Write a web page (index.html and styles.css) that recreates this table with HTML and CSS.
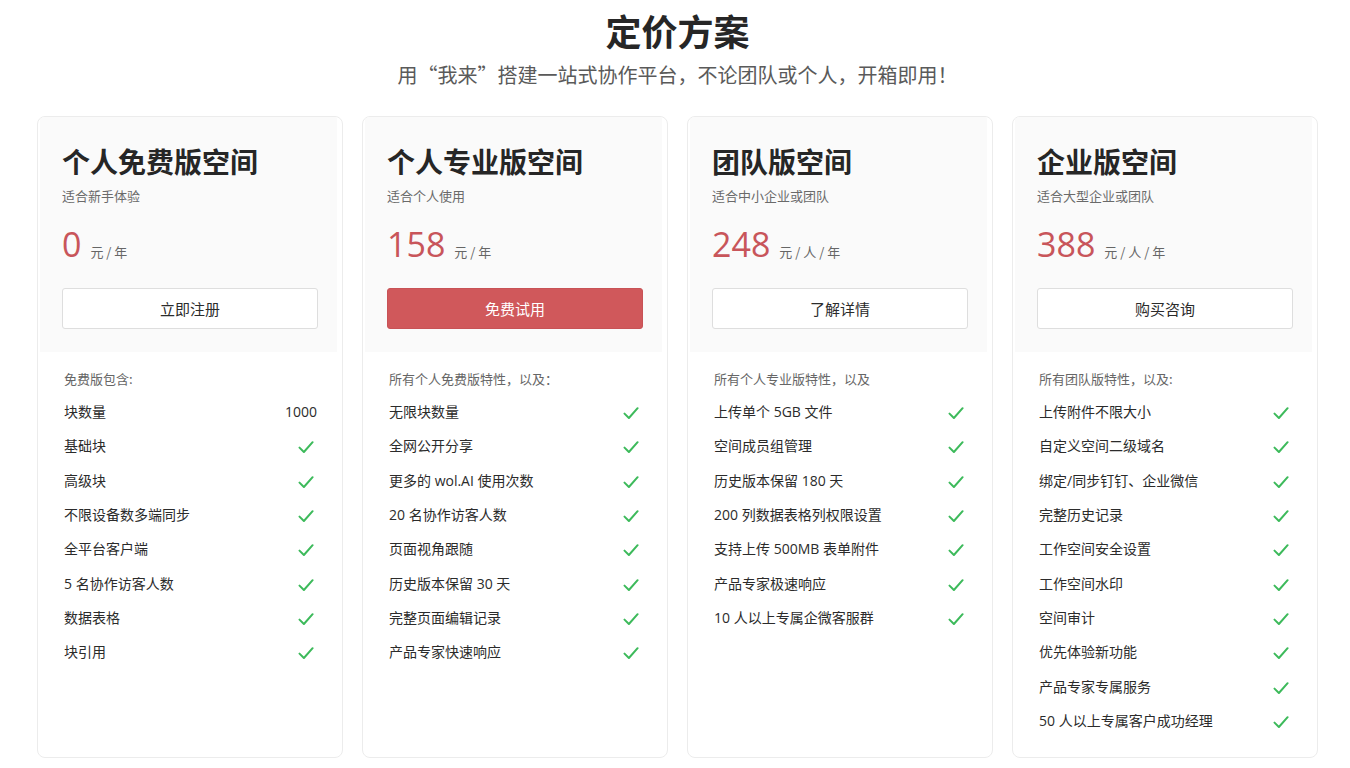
FILE: index.html
```html
<!DOCTYPE html>
<html lang="zh-CN">
<head>
<meta charset="utf-8">
<title>定价方案</title>
<link rel="stylesheet" href="styles.css">
</head>
<body>
<svg width="0" height="0" style="position:absolute">
  <defs>
    <symbol id="chk" viewBox="0 0 16 16">
      <path d="M1.5 8.6 L5.9 13 L14.6 3.2" fill="none" stroke="currentColor" stroke-width="2" stroke-linecap="round" stroke-linejoin="round"/>
    </symbol>
  </defs>
</svg>
<main class="page">
  <h1 class="title">定价方案</h1>
  <p class="subtitle">用“我来”搭建一站式协作平台，不论团队或个人，开箱即用！</p>
  <section class="plans">
    <article class="card">
      <div class="head">
        <h2 class="name">个人免费版空间</h2>
        <p class="desc">适合新手体验</p>
        <div class="price"><span class="num">0</span><span class="unit">元 / 年</span></div>
        <button class="btn">立即注册</button>
      </div>
      <div class="body">
        <p class="intro">免费版包含:</p>
        <ul class="feats">
          <li><span>块数量</span><span class="val">1000</span></li>
          <li><span>基础块</span><svg class="ck"><use href="#chk"/></svg></li>
          <li><span>高级块</span><svg class="ck"><use href="#chk"/></svg></li>
          <li><span>不限设备数多端同步</span><svg class="ck"><use href="#chk"/></svg></li>
          <li><span>全平台客户端</span><svg class="ck"><use href="#chk"/></svg></li>
          <li><span>5 名协作访客人数</span><svg class="ck"><use href="#chk"/></svg></li>
          <li><span>数据表格</span><svg class="ck"><use href="#chk"/></svg></li>
          <li><span>块引用</span><svg class="ck"><use href="#chk"/></svg></li>
        </ul>
      </div>
    </article>
    <article class="card">
      <div class="head">
        <h2 class="name">个人专业版空间</h2>
        <p class="desc">适合个人使用</p>
        <div class="price"><span class="num">158</span><span class="unit">元 / 年</span></div>
        <button class="btn primary">免费试用</button>
      </div>
      <div class="body">
        <p class="intro">所有个人免费版特性，以及：</p>
        <ul class="feats">
          <li><span>无限块数量</span><svg class="ck"><use href="#chk"/></svg></li>
          <li><span>全网公开分享</span><svg class="ck"><use href="#chk"/></svg></li>
          <li><span>更多的 wol.AI 使用次数</span><svg class="ck"><use href="#chk"/></svg></li>
          <li><span>20 名协作访客人数</span><svg class="ck"><use href="#chk"/></svg></li>
          <li><span>页面视角跟随</span><svg class="ck"><use href="#chk"/></svg></li>
          <li><span>历史版本保留 30 天</span><svg class="ck"><use href="#chk"/></svg></li>
          <li><span>完整页面编辑记录</span><svg class="ck"><use href="#chk"/></svg></li>
          <li><span>产品专家快速响应</span><svg class="ck"><use href="#chk"/></svg></li>
        </ul>
      </div>
    </article>
    <article class="card">
      <div class="head">
        <h2 class="name">团队版空间</h2>
        <p class="desc">适合中小企业或团队</p>
        <div class="price"><span class="num">248</span><span class="unit">元 / 人 / 年</span></div>
        <button class="btn">了解详情</button>
      </div>
      <div class="body">
        <p class="intro">所有个人专业版特性，以及</p>
        <ul class="feats">
          <li><span>上传单个 5GB 文件</span><svg class="ck"><use href="#chk"/></svg></li>
          <li><span>空间成员组管理</span><svg class="ck"><use href="#chk"/></svg></li>
          <li><span>历史版本保留 180 天</span><svg class="ck"><use href="#chk"/></svg></li>
          <li><span>200 列数据表格列权限设置</span><svg class="ck"><use href="#chk"/></svg></li>
          <li><span>支持上传 500MB 表单附件</span><svg class="ck"><use href="#chk"/></svg></li>
          <li><span>产品专家极速响应</span><svg class="ck"><use href="#chk"/></svg></li>
          <li><span>10 人以上专属企微客服群</span><svg class="ck"><use href="#chk"/></svg></li>
        </ul>
      </div>
    </article>
    <article class="card">
      <div class="head">
        <h2 class="name">企业版空间</h2>
        <p class="desc">适合大型企业或团队</p>
        <div class="price"><span class="num">388</span><span class="unit">元 / 人 / 年</span></div>
        <button class="btn">购买咨询</button>
      </div>
      <div class="body">
        <p class="intro">所有团队版特性，以及:</p>
        <ul class="feats">
          <li><span>上传附件不限大小</span><svg class="ck"><use href="#chk"/></svg></li>
          <li><span>自定义空间二级域名</span><svg class="ck"><use href="#chk"/></svg></li>
          <li><span>绑定/同步钉钉、企业微信</span><svg class="ck"><use href="#chk"/></svg></li>
          <li><span>完整历史记录</span><svg class="ck"><use href="#chk"/></svg></li>
          <li><span>工作空间安全设置</span><svg class="ck"><use href="#chk"/></svg></li>
          <li><span>工作空间水印</span><svg class="ck"><use href="#chk"/></svg></li>
          <li><span>空间审计</span><svg class="ck"><use href="#chk"/></svg></li>
          <li><span>优先体验新功能</span><svg class="ck"><use href="#chk"/></svg></li>
          <li><span>产品专家专属服务</span><svg class="ck"><use href="#chk"/></svg></li>
          <li><span>50 人以上专属客户成功经理</span><svg class="ck"><use href="#chk"/></svg></li>
        </ul>
      </div>
    </article>
  </section>
</main>
</body>
</html>
```

FILE: styles.css
```css
* { box-sizing: border-box; }
html, body { margin: 0; padding: 0; background: #fff; }
body {
  font-family: "Open Sans", "Noto Sans CJK SC", sans-serif;
  color: #2b2b2b;
}
.page {
  width: 1350px;
  padding: 6px 0 0 37px;
}
.title {
  margin: 0;
  width: 1281px;
  text-align: center;
  font-family: "Noto Sans CJK SC", sans-serif;
  font-size: 36px;
  line-height: 48px;
  font-weight: 700;
  color: #262626;
}
.subtitle {
  margin: 7px 0 0;
  width: 1281px;
  text-align: center;
  font-family: "Noto Sans CJK SC", sans-serif;
  font-size: 20px;
  line-height: 28px;
  color: #5a5a5a;
}
.plans {
  margin-top: 27px;
  width: 1281px;
  display: grid;
  grid-template-columns: repeat(4, 306px);
  gap: 19px;
}
.card {
  height: 642px;
  border: 1px solid #ececec;
  border-radius: 8px;
  background: #fff;
  overflow: hidden;
}
.head {
  margin: 0 5px 0 2px;
  background: #fafafa;
  padding: 26px 22px 22px 22px;
  height: 235px;
}
.name {
  margin: 0;
  font-family: "Noto Sans CJK SC", sans-serif;
  font-size: 28px;
  line-height: 36px;
  font-weight: 700;
  color: #262626;
}
.desc {
  margin: 8px 0 0;
  font-family: "Noto Sans CJK SC", sans-serif;
  font-size: 13px;
  line-height: 18px;
  color: #6a6a6a;
}
.price {
  margin-top: 19px;
  display: flex;
  align-items: baseline;
  height: 40px;
}
.num {
  font-size: 34px;
  line-height: 40px;
  color: #c8555a;
}
.unit {
  margin-left: 9px;
  font-family: "Noto Sans CJK SC", sans-serif;
  font-size: 13px;
  color: #666;
}
.btn {
  display: block;
  margin-top: 24px;
  width: 256px;
  height: 41px;
  border: 1px solid #dedede;
  border-radius: 3px;
  background: #fff;
  font-family: "Noto Sans CJK SC", sans-serif;
  font-size: 15px;
  color: #2b2b2b;
  cursor: pointer;
}
.btn.primary {
  background: #d0585b;
  border-color: #c85256;
  color: #fff;
}
.body {
  padding: 17px 26px 0 26px;
}
.intro {
  margin: 0;
  font-family: "Noto Sans CJK SC", sans-serif;
  font-size: 13px;
  line-height: 20px;
  color: #666;
}
.feats {
  list-style: none;
  margin: 5px 0 0;
  padding: 0;
}
.feats li {
  display: flex;
  justify-content: space-between;
  align-items: center;
  height: 34.3px;
  font-family: "Open Sans", "Noto Sans CJK SC", sans-serif;
  font-size: 14px;
  color: #2b2b2b;
}
.feats .val {
  font-size: 14px;
  margin-right: -1px;
}
.ck {
  width: 16px;
  height: 16px;
  color: #3dba5b;
  margin-right: 2px;
  margin-top: 4px;
}
```
